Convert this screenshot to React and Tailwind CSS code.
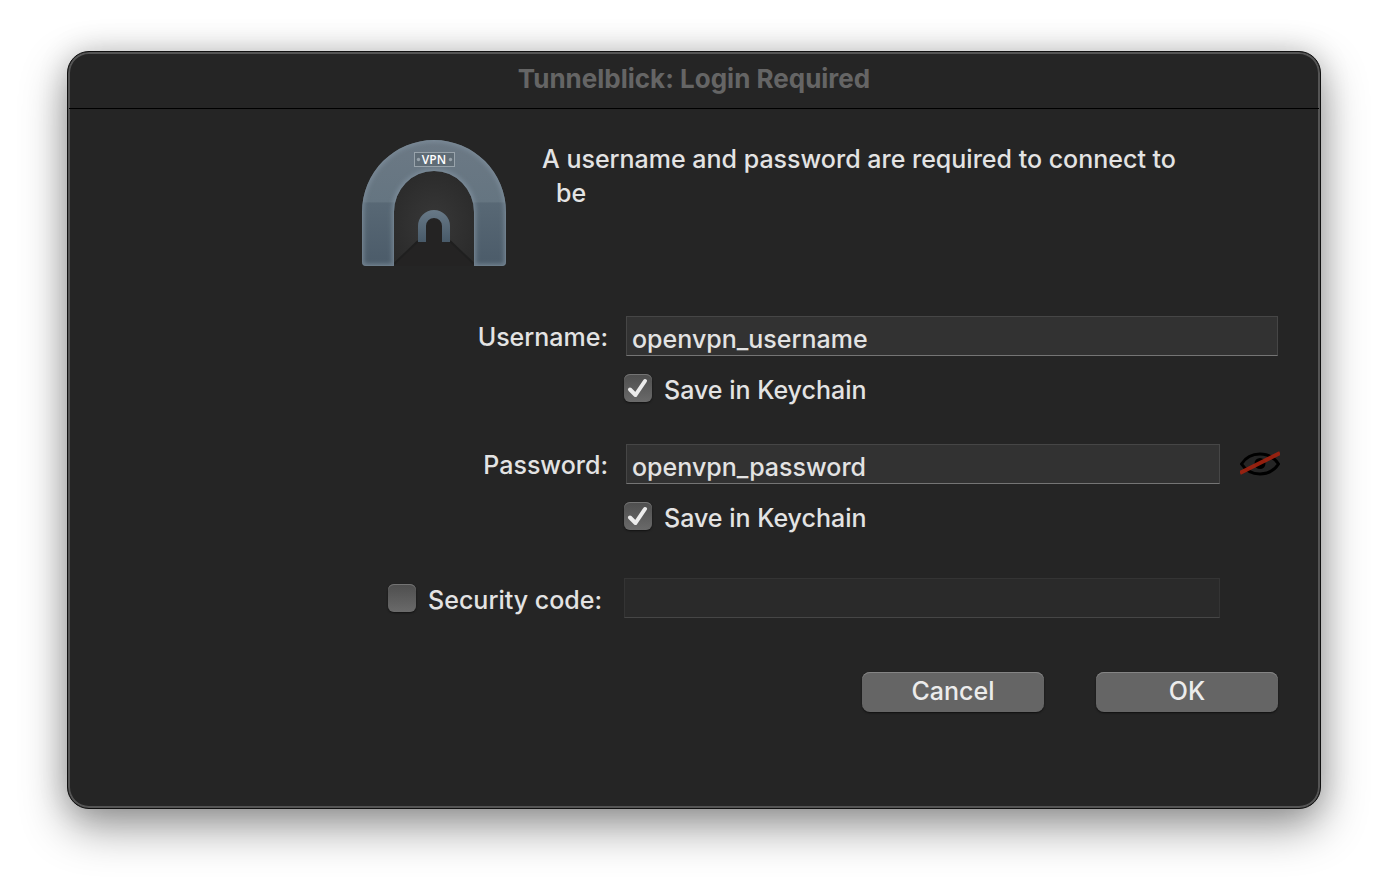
import { useState } from "react";

function TunnelIcon() {
  return (
    <svg width="144" height="126" viewBox="0 0 144 126" className="shrink-0" role="img" aria-label="VPN tunnel">
      <defs>
        <linearGradient id="arch" x1="0" y1="0" x2="0" y2="1">
          <stop offset="0" stopColor="#6c7985" />
          <stop offset="0.49" stopColor="#657581" />
          <stop offset="0.5" stopColor="#586875" />
          <stop offset="1" stopColor="#4b5b69" />
        </linearGradient>
        <linearGradient id="smallArch" x1="0" y1="0" x2="0" y2="1">
          <stop offset="0" stopColor="#687987" />
          <stop offset="1" stopColor="#485a69" />
        </linearGradient>
        <radialGradient id="hole" cx="0.5" cy="0.55" r="0.65">
          <stop offset="0" stopColor="#383838" />
          <stop offset="1" stopColor="#292929" />
        </radialGradient>
        <filter id="soft" x="-10%" y="-10%" width="120%" height="120%">
          <feGaussianBlur stdDeviation="2" />
        </filter>
        <clipPath id="archClip">
          <path d="M0 72a72 72 0 0 1 144 0v50q0 4-4 4h-28V72a40 41 0 0 0-80 0v54H4q-4 0-4-4z" />
        </clipPath>
      </defs>
      <path d="M32 126V72a40 41 0 0 1 80 0v54z" fill="url(#hole)" />
      <path d="M32 126v-3l24-22h32l24 22v3z" fill="#242323" />
      <path d="M32 124l24-23M112 124L88 101" stroke="#1f1f1f" strokeWidth="2" />
      <g clipPath="url(#archClip)">
        <path d="M0 0h144v126H0z" fill="url(#arch)" />
        <path
          d="M0 72a72 72 0 0 1 144 0v50q0 4-4 4h-28V72a40 41 0 0 0-80 0v54H4q-4 0-4-4z"
          fill="none"
          stroke="#8496a4"
          strokeOpacity="0.7"
          strokeWidth="4"
          filter="url(#soft)"
        />
        <path
          d="M0 72a72 72 0 0 1 144 0v50q0 4-4 4h-28V72a40 41 0 0 0-80 0v54H4q-4 0-4-4z"
          fill="none"
          stroke="#7d8f9c"
          strokeOpacity="0.3"
          strokeWidth="2"
        />
      </g>
      <path d="M64 102V86q0-8 8-8t8 8v16z" fill="#242323" />
      <path d="M56 102V86a16 16 0 0 1 32 0v16h-8V86a8 8 0 0 0-16 0v16z" fill="url(#smallArch)" />
      <rect x="52.5" y="12.5" width="40" height="14" fill="#5f6c76" stroke="#98a3ab" />
      <circle cx="56.5" cy="19.5" r="1.7" fill="#98a3ab" />
      <circle cx="88.5" cy="19.5" r="1.7" fill="#98a3ab" />
      <text x="72" y="24" textAnchor="middle" fontSize="12" fontWeight="600" fontFamily="Open Sans, sans-serif" fill="#fff">
        VPN
      </text>
    </svg>
  );
}

function HiddenEyeIcon() {
  return (
    <svg width="40" height="28" viewBox="0 0 40 28" aria-hidden="true">
      <path d="M1.5 14C10 .8 30 .8 38.5 14C30 27.200 10 27.200 1.5 14z" fill="none" stroke="#000" strokeWidth="3" />
      <circle cx="20" cy="13.5" r="5.5" fill="#000" />
      <path d="M0 23L40 3" stroke="#a3220f" strokeWidth="4" strokeOpacity="0.9" />
    </svg>
  );
}

function Checkbox({ id, defaultChecked }) {
  return (
    <span className="grid size-7 shrink-0">
      <input
        id={id}
        type="checkbox"
        defaultChecked={defaultChecked}
        className="peer col-start-1 row-start-1 size-7 appearance-none rounded-md bg-linear-to-b from-[#4e4e4e] to-[#6a6a6a] shadow-[inset_0_1px_0_#747474,0_1px_2px_#0008]"
      />
      <svg
        viewBox="0 0 28 28"
        className="pointer-events-none col-start-1 row-start-1 size-7 opacity-0 peer-checked:opacity-100"
        fill="none"
        stroke="#ececec"
        strokeWidth="4"
        strokeLinecap="round"
        strokeLinejoin="round"
        aria-hidden="true"
      >
        <path d="M6 15.500L11.500 21L21 7" />
      </svg>
    </span>
  );
}

const field =
  "h-10 min-w-0 flex-1 border border-[#464646] border-b-[#757575] bg-[#323232] px-[5px] pt-1.5 text-[#e3e3e3] outline-none";
const button =
  "h-10 w-[182px] rounded-lg bg-[#656565] pb-0.5 font-medium text-[#ececec] shadow-[inset_0_1px_0_#858585,0_1px_2px_#0009]";

export default function App() {
  const [username, setUsername] = useState("openvpn_username");
  const [password, setPassword] = useState("openvpn_password");

  return (
    <main className="min-h-screen bg-white px-[67px] py-[51px] font-['Inter',sans-serif] text-[25px] leading-[34px] font-medium text-[#e3e3e3]">
      <section
        aria-labelledby="title"
        className="rounded-[22px] border border-[#101010] bg-[#252525] pb-24 shadow-[inset_0_0_0_2px_#555555,0_18px_46px_#00000068,0_0_30px_#00000028]"
      >
        <header className="mx-px border-b border-black pt-2.5 pb-3">
          <h1 id="title" className="text-center text-[26px] font-bold text-[#656565]">
            Tunnelblick: Login Required
          </h1>
        </header>

        <div className="flex gap-9 pt-[31px] pl-[294px]">
          <TunnelIcon />
          <p className="pt-0.5">
            A username and password are required to connect to
            <br />
            <span className="pl-3.5">be</span>
          </p>
        </div>

        <form className="mt-[50px] pr-[42px]" onSubmit={(e) => e.preventDefault()}>
          <div className="grid grid-cols-[540px_1fr] gap-x-4">
            <label htmlFor="username" className="pt-1 text-right">
              Username:
            </label>
            <div className="flex pl-0.5">
              <input id="username" type="text" className={field} value={username} onChange={(e) => setUsername(e.target.value)} />
            </div>

            <div className="col-start-2 flex h-16 items-center gap-3">
              <Checkbox id="save-username" defaultChecked />
              <label htmlFor="save-username" className="pt-1">
                Save in Keychain
              </label>
            </div>
          </div>

          <div className="mt-6 grid grid-cols-[540px_1fr] gap-x-4">
            <label htmlFor="password" className="pt-1 text-right">
              Password:
            </label>
            <div className="flex items-center pl-0.5">
              <input id="password" type="text" className={field} value={password} onChange={(e) => setPassword(e.target.value)} />
              <button type="button" aria-label="Toggle password visibility" className="-mr-0.5 ml-5 shrink-0">
                <HiddenEyeIcon />
              </button>
            </div>

            <div className="col-start-2 flex h-16 items-center gap-3">
              <Checkbox id="save-password" defaultChecked />
              <label htmlFor="save-password" className="pt-1">
                Save in Keychain
              </label>
            </div>
          </div>

          <div className="mt-[30px] grid grid-cols-[540px_1fr] gap-x-4">
            <div className="flex items-center justify-end gap-3 pr-1.5">
              <Checkbox id="use-code" />
              <label htmlFor="use-code" className="pt-1">
                Security code:
              </label>
            </div>
            <div className="flex pr-[58px]">
              <input
                type="text"
                aria-label="Security code"
                disabled
                className="h-10 min-w-0 flex-1 border border-[#343434] border-b-[#464646] bg-[#2a2a2a] px-[5px]"
              />
            </div>
          </div>

          <div className="mt-[54px] flex justify-end gap-[52px]">
            <button type="button" className={button}>
              Cancel
            </button>
            <button type="submit" className={button}>
              OK
            </button>
          </div>
        </form>
      </section>
    </main>
  );
}
